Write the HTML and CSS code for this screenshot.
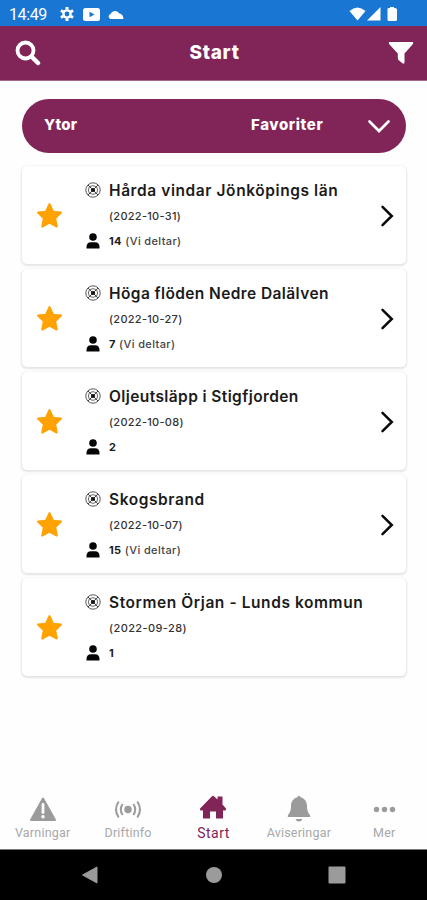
FILE: index.html
```html
<!DOCTYPE html>
<html lang="sv">
<head>
<meta charset="utf-8">
<title>Start</title>
<link rel="stylesheet" href="styles.css">
</head>
<body>
<svg class="defs" width="0" height="0">
  <symbol id="star" viewBox="0 0 26 26"><path d="M13 2 16.4 9.3 24.1 10.2 18.4 15.6 20 23.6 13 19.8 6 23.6 7.6 15.6 1.9 10.2 9.6 9.3Z" fill="#ffa202" stroke="#ffa202" stroke-width="2" stroke-linejoin="round"/></symbol>
  <symbol id="web" viewBox="0 0 16 16"><g fill="none" stroke="#444"><circle cx="8" cy="8" r="7.2" stroke-width=".9"/><path d="M4.300 4.800Q8 2.500 11.700 4.800Q13.500 8 11.700 11.200Q8 13.500 4.300 11.200Q2.500 8 4.300 4.800Z" stroke-width=".8"/><path d="M3 3 13 13M13 3 3 13" stroke-width="1"/></g><circle cx="8" cy="8" r="2.1" fill="#111"/></symbol>
  <symbol id="person" viewBox="0 0 14 16"><circle cx="7" cy="4" r="3.8" fill="#050505"/><path d="M.5 15.5V14Q.5 9.3 5 9.3H9Q13.500 9.300 13.500 14V15.500Z" fill="#050505"/></symbol>
  <symbol id="chevron" viewBox="0 0 14 24"><path d="M2.500 2.800 11.800 12 2.500 21.200" fill="none" stroke="#0a0a0a" stroke-width="2.500" stroke-linecap="round" stroke-linejoin="miter"/></symbol>
</svg>
<div class="status">
  <span class="time">14:49</span>
  <svg class="gear" width="14" height="14" viewBox="0 0 14 14"><g fill="none" stroke="#fff"><circle cx="7" cy="7" r="3.600" stroke-width="2.400"/><path d="M7 0V2.500M7 11.500V14M.9 3.500 3.200 4.800M10.800 9.200 13.100 10.500M.9 10.500 3.200 9.200M10.800 4.800 13.100 3.500" stroke-width="3"/></g></svg>
  <svg class="video" width="17" height="13" viewBox="0 0 17 13"><rect width="17" height="13" rx="2.500" fill="#fff"/><path d="M6.500 3.800 11.500 6.500 6.500 9.200Z" fill="#1976d2"/></svg>
  <svg class="cloud" width="16" height="9" viewBox="0 0 16 9"><path d="M2.500 9A2.600 2.600 0 0 1 2.500 4 4.800 4.800 0 0 1 11 3.200Q15.500 4.500 15.500 9Z" fill="#fff"/></svg>
  <svg class="signals" width="50" height="16" viewBox="0 0 50 16"><path d="M.5 5Q8.500-2 16.500 5L8.500 14.500Z" fill="#fff"/><path d="M18 14.500 31.500 1V14.500Z" fill="#fff"/><path d="M38.500 3Q38.500 2 40 2H41V1H45V2H46Q48 2 48 3.500V13.500Q48 15 46.500 15H40Q38.500 15 38.500 13.500Z" fill="#fff"/></svg>
</div>
<header class="header">
  <svg width="26" height="26" viewBox="0 0 26 26"><circle cx="10.500" cy="10.500" r="8" fill="none" stroke="#fff" stroke-width="3.800"/><path d="M16.500 16.500 23 23" stroke="#fff" stroke-width="4.500" stroke-linecap="round"/></svg>
  <h1>Start</h1>
  <svg width="26" height="24" viewBox="0 0 26 24"><path d="M1 1H25Q25.600 2.500 24.500 3.600L16.500 12.500V21.500Q16.500 23 14.800 22.500L11 19.500Q9.800 18.600 9.800 17V12.500L1.500 3.600Q.4 2.500 1 1Z" fill="#fff"/></svg>
</header>
<main>
  <div class="select">
    <span class="area">Ytor</span>
    <span class="favorites">Favoriter</span>
    <svg width="24" height="16" viewBox="0 0 24 16"><path d="M2.500 3.500 12 13 21.500 3.500" fill="none" stroke="#fff" stroke-width="2.700" stroke-linecap="round"/></svg>
  </div>
  <div class="list">
    <article class="card"><svg class="star"><use href="#star"/></svg>
      <div class="info"><svg class="web"><use href="#web"/></svg><h2 class="wide">Hårda vindar Jönköpings län</h2><p class="date">(2022-10-31)</p><svg class="person"><use href="#person"/></svg><p class="count"><b>14</b> (Vi deltar)</p></div>
      <svg class="chevron"><use href="#chevron"/></svg></article>
    <article class="card"><svg class="star"><use href="#star"/></svg>
      <div class="info"><svg class="web"><use href="#web"/></svg><h2>Höga flöden Nedre Dalälven</h2><p class="date">(2022-10-27)</p><svg class="person"><use href="#person"/></svg><p class="count"><b>7</b> (Vi deltar)</p></div>
      <svg class="chevron"><use href="#chevron"/></svg></article>
    <article class="card"><svg class="star"><use href="#star"/></svg>
      <div class="info"><svg class="web"><use href="#web"/></svg><h2>Oljeutsläpp i Stigfjorden</h2><p class="date">(2022-10-08)</p><svg class="person"><use href="#person"/></svg><p class="count"><b>2</b></p></div>
      <svg class="chevron"><use href="#chevron"/></svg></article>
    <article class="card"><svg class="star"><use href="#star"/></svg>
      <div class="info"><svg class="web"><use href="#web"/></svg><h2 class="wide">Skogsbrand</h2><p class="date">(2022-10-07)</p><svg class="person"><use href="#person"/></svg><p class="count"><b>15</b> (Vi deltar)</p></div>
      <svg class="chevron"><use href="#chevron"/></svg></article>
    <article class="card"><svg class="star"><use href="#star"/></svg>
      <div class="info"><svg class="web"><use href="#web"/></svg><h2 class="wide">Stormen Örjan - Lunds kommun</h2><p class="date last">(2022-09-28)</p><svg class="person"><use href="#person"/></svg><p class="count"><b>1</b></p></div></article>
  </div>
</main>
<nav class="tabs">
  <div class="tab"><svg width="28" height="28" viewBox="0 0 28 28"><path d="M14 3.500 26 25H2Z" fill="#9b9b9b" stroke="#9b9b9b" stroke-width="2" stroke-linejoin="round"/><path d="M14 9.500V17.500" stroke="#fff" stroke-width="2.800" stroke-linecap="round"/><circle cx="14" cy="21.800" r="1.800" fill="#fff"/></svg><span>Varningar</span></div>
  <div class="tab"><svg width="28" height="28" viewBox="0 0 28 28"><circle cx="14" cy="14.500" r="3.700" fill="#9b9b9b"/><path d="M8.600 9Q5 14.500 8.600 20M19.400 9Q23 14.500 19.400 20M4.700 6.500Q-.7 14.500 4.700 22.500M23.300 6.500Q28.700 14.500 23.300 22.500" fill="none" stroke="#9b9b9b" stroke-width="2"/></svg><span>Driftinfo</span></div>
  <div class="tab active"><svg width="28" height="28" viewBox="0 0 28 28"><path d="M.8 13.800 13 1.200Q14 .4 15 1.200L18.500 4.500V1.500H23.500V9.500L27.200 13.800 26.500 15.500H24V23.500H17V16.500H11V23.500H4V15.500H1.500Z" fill="#812457"/></svg><span>Start</span></div>
  <div class="tab"><svg width="28" height="28" viewBox="0 0 28 28"><path d="M12.500 2.200A1.500 1.500 0 0 1 15.500 2.200C20 3.200 22 7 22 11 22 16 23.500 18 25.200 20.500V22H2.800V20.500C4.500 18 6 16 6 11 6 7 8 3.200 12.500 2.200ZM10.500 24H17.500Q16.500 26.500 14 26.500T10.500 24Z" fill="#9b9b9b"/></svg><span>Aviseringar</span></div>
  <div class="tab"><svg width="28" height="28" viewBox="0 0 28 28"><g fill="#9b9b9b"><circle cx="6.500" cy="14.500" r="2.700"/><circle cx="14.500" cy="14.500" r="2.700"/><circle cx="22.500" cy="14.500" r="2.700"/></g></svg><span>Mer</span></div>
</nav>
<footer class="system">
  <svg width="18" height="20" viewBox="0 0 18 20"><path d="M1.500 10 16 2V18Z" fill="#9b9b9b" stroke="#9b9b9b" stroke-linejoin="round"/></svg>
  <svg width="18" height="20" viewBox="0 0 18 20"><circle cx="9" cy="10" r="8" fill="#9b9b9b"/></svg>
  <svg width="18" height="20" viewBox="0 0 18 20"><rect x=".5" y="1.500" width="17" height="17" rx="1" fill="#9b9b9b"/></svg>
</footer>
</body>
</html>
```
FILE: styles.css
```css
* { box-sizing: border-box; }
body {
  margin: 0;
  width: 427px;
  height: 900px;
  display: flex;
  flex-direction: column;
  overflow: hidden;
  background: #fefefe;
  font-family: Inter, sans-serif;
  color: #1b1b1b;
}
h1, h2, p { margin: 0; white-space: nowrap; }
svg { display: block; flex: none; }
.defs { display: none; }
.status {
  height: 26px;
  flex: none;
  display: flex;
  align-items: center;
  padding: 2px 28px 0 9px;
  background: #1976d2;
  color: #fff;
}
.time { width: 51px; padding-top: 1px; font: 16px/24px Roboto, sans-serif; letter-spacing: -0.4px; }
.video { margin-left: 9px; }
.cloud { margin-left: 8px; }
.signals { margin-left: auto; }
.header {
  height: 55px;
  flex: none;
  display: flex;
  align-items: center;
  justify-content: space-between;
  padding: 0 13px 0 15px;
  background: #812457;
  border-bottom: 1px solid #a36889;
  color: #fff;
}
h1 { font-size: 19px; line-height: 24px; font-weight: 800; letter-spacing: 0.7px; padding-bottom: 1px; }
main { flex: 1; padding: 18px 21px 0 22px; }
.select {
  height: 54px;
  display: flex;
  align-items: center;
  padding: 0 15px 0 22px;
  border-radius: 27px;
  background: #812457;
  color: #fff;
  font-size: 15px;
  font-weight: 800;
}
.select span { padding-bottom: 4px; }
.area { width: 207px; letter-spacing: 0.2px; }
.favorites { flex: 1; letter-spacing: 0.6px; }
.list { display: flex; flex-direction: column; gap: 5px; margin-top: 13px; }
.card {
  height: 98px;
  display: flex;
  align-items: center;
  padding: 1px 12px 0 14px;
  background: #fff;
  border-radius: 5px;
  box-shadow: 0 1px 2px 1px #e5e5e5;
}
.star { width: 27px; height: 27px; }
.info {
  flex: 1;
  display: grid;
  grid-template-columns: 24px 1fr;
  grid-template-rows: repeat(3, 25.5px);
  align-items: center;
  margin-left: 22px;
}
.web { width: 16px; height: 16px; }
.person { width: 14px; height: 16px; margin-left: 1px; }
.info h2 { font-size: 15.5px; font-weight: 600; letter-spacing: 0.4px; padding-top: 1px; }
.info .wide { letter-spacing: 0.58px; }
.date { grid-column: 2; font-size: 11px; font-weight: 500; letter-spacing: 0.28px; color: #333; }
.date.last { letter-spacing: 0.4px; }
.count { font-size: 11px; font-weight: 500; letter-spacing: 0.38px; color: #444; }
.count b { font-weight: 700; color: #1b1b1b; }
.chevron { width: 14px; height: 24px; }
.tabs { flex: none; height: 54px; display: grid; grid-template-columns: repeat(5, 1fr); }
.tab {
  display: flex;
  flex-direction: column;
  align-items: center;
  color: #a8a8a8;
  font: 12.5px/20px Roboto, sans-serif;
  letter-spacing: 0.2px;
}
.active { color: #812457; font-size: 14px; letter-spacing: 0.5px; }
.system {
  flex: none;
  height: 51px;
  display: flex;
  justify-content: space-between;
  align-items: center;
  padding: 0 81px;
  border-top: 1px solid #777;
  background: #000;
}
```
